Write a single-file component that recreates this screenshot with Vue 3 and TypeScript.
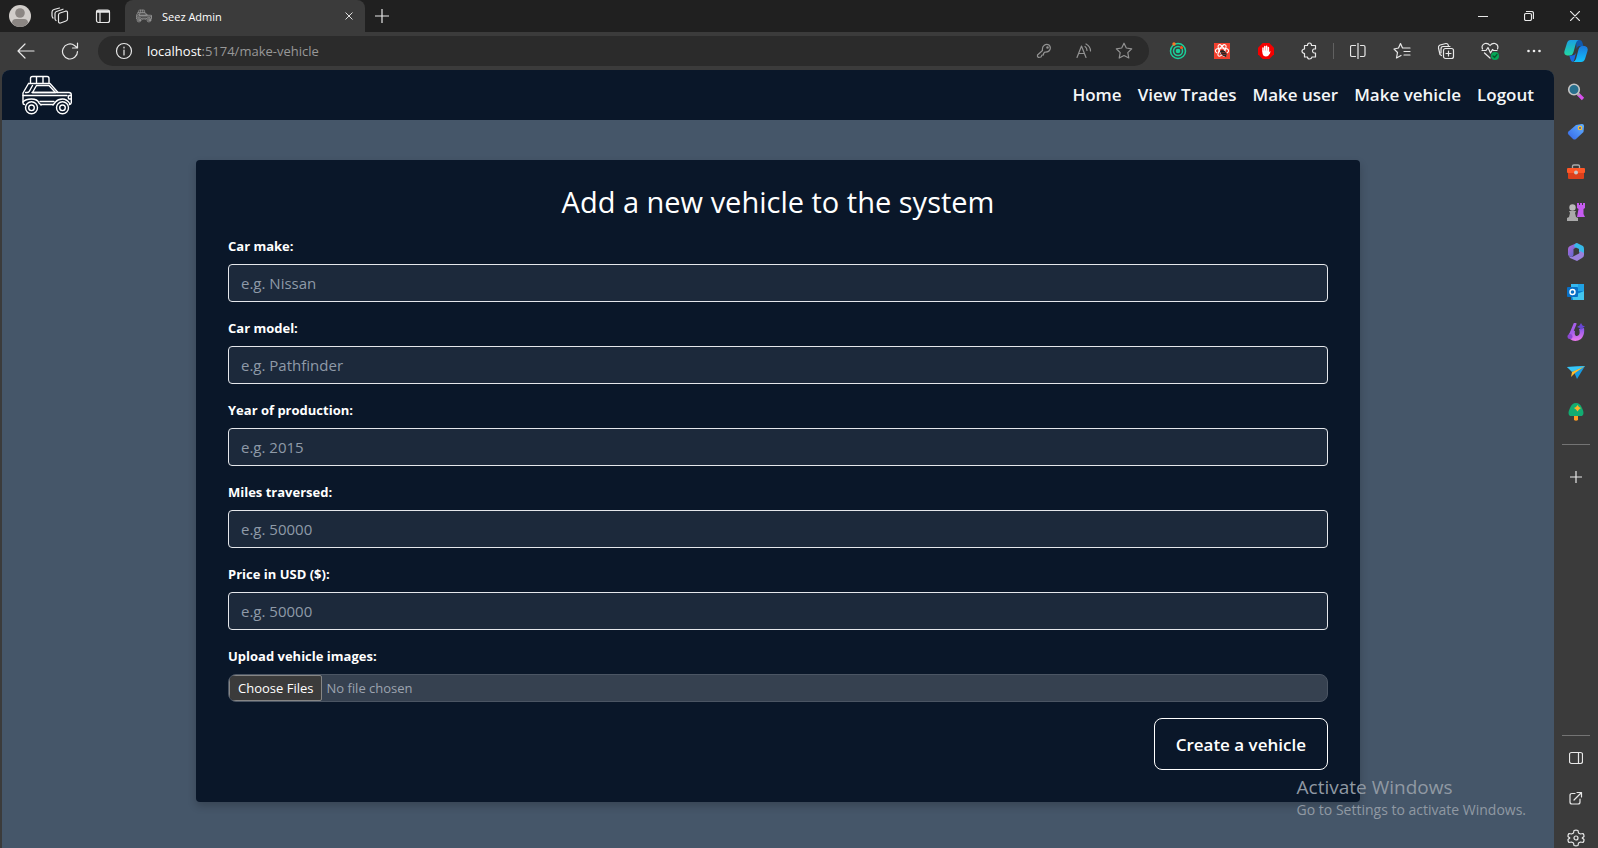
<script setup lang="ts">
import { ref } from 'vue'

interface Field {
  id: string
  label: string
  placeholder: string
}

const fields: Field[] = [
  { id: 'make', label: 'Car make:', placeholder: 'e.g. Nissan' },
  { id: 'model', label: 'Car model:', placeholder: 'e.g. Pathfinder' },
  { id: 'year', label: 'Year of production:', placeholder: 'e.g. 2015' },
  { id: 'miles', label: 'Miles traversed:', placeholder: 'e.g. 50000' },
  { id: 'price', label: 'Price in USD ($):', placeholder: 'e.g. 50000' },
]
const values = ref<Record<string, string>>({ make: '', model: '', year: '', miles: '', price: '' })
const links: string[] = ['Home', 'View Trades', 'Make user', 'Make vehicle', 'Logout']
</script>

<template>
  <div class="window">
    <svg class="defs" aria-hidden="true">
      <defs>
        <symbol id="car" viewBox="0 0 50 40">
          <g fill="none" stroke="currentColor" stroke-width="1.4" stroke-linejoin="round" stroke-linecap="round">
            <path d="M8.5 7.500V3.500Q8.500 1.500 10.500 1.500H25Q27 1.500 27 3.500V7.500M14.500 1.500V7.500M21 1.500V7.500" />
            <path d="M6.500 8.500H28L36 17.500H47Q49.300 17.500 49.300 20V27.500Q49.300 29 47.500 29.500M6.500 8.500L1 18V28Q1 29.500 2.500 29.500" />
            <path d="M14.500 10.500H27L33.500 17.500H10.500ZM10.500 10.500L7.500 16Q7 17.500 5 17.500H3.500" />
            <path d="M1 20.500H45M10 17.500H36M49 20.500H47Q45.500 22.500 47 24H49M18 26.500H32M19 29.500H31" />
            <path d="M1 27Q3.500 24 9.500 24T17 28L19 30M31 30L33.500 27Q36 24 40.500 24T48 29" />
            <circle cx="9.500" cy="32.800" r="6" /><circle cx="40.500" cy="32.800" r="6" />
            <circle cx="9.500" cy="32.800" r="2.800" /><circle cx="40.500" cy="32.800" r="2.800" />
          </g>
        </symbol>
        <linearGradient id="teal" x1="0" y1="0" x2="0" y2="1"><stop offset="0" stop-color="#1a9fe4" /><stop offset="1" stop-color="#22d8a0" /></linearGradient>
        <linearGradient id="azure" x1="0" y1="0" x2="0" y2="1"><stop offset="0" stop-color="#1b78dc" /><stop offset="1" stop-color="#12c2fb" /></linearGradient>
        <linearGradient id="tagblue" x1="1" y1="0" x2="0" y2="1"><stop offset="0" stop-color="#62b2ff" /><stop offset="1" stop-color="#3566e8" /></linearGradient>
        <linearGradient id="violet" x1="0" y1="0" x2="0" y2="1"><stop offset="0" stop-color="#8456e8" /><stop offset="1" stop-color="#ee79ee" /></linearGradient>
        <linearGradient id="office" x1="0" y1="0" x2="1" y2="1"><stop offset="0" stop-color="#be69dc" /><stop offset="1" stop-color="#4268cb" /></linearGradient>
      </defs>
    </svg>

    <header class="tabs">
      <button class="chrome avatar" aria-label="Profile">
        <svg width="24" height="24" viewBox="0 0 24 24"><circle cx="12" cy="12" r="11" fill="#d1cdca" /><circle cx="12" cy="9" r="4.800" fill="#8b8683" /><path d="M4 19Q4 15 8 15H16Q20 15 20 19Q17 23 12 23T4 19" fill="#8b8683" /></svg>
      </button>
      <button class="chrome workspaces" aria-label="Workspaces">
        <svg width="18" height="18" viewBox="0 0 18 18" class="line"><path d="M7.500 8Q7.500 6.500 9 6L14.500 4.200Q16.500 3.800 16.500 5.500V12Q16.500 13.500 15 14L9.500 16Q7.500 16.300 7.500 14.500ZM5 13.500Q4 13 4 11.500V6.500Q4 5 5.500 4.500L12 2.200M2 11Q1 10 1 8.500V5Q1 3 3 2.500L8.500 1" /></svg>
      </button>
      <button class="chrome tab-actions" aria-label="Tab actions">
        <svg width="16" height="16" viewBox="0 0 16 16" class="line"><rect x="1.500" y="2" width="13" height="12.500" rx="2" /><path d="M2.500 3.500H13.500" stroke-width="2.600" /><path d="M5 4V14" /></svg>
      </button>
      <div class="tab">
        <svg class="favicon" width="16" height="16"><use href="#car" /></svg>
        <span class="tab-title">Seez Admin</span>
        <button class="chrome close" aria-label="Close tab"><svg width="8" height="8" viewBox="0 0 10 10" class="line"><path d="M1 1L9 9M9 1L1 9" /></svg></button>
      </div>
      <button class="chrome new-tab" aria-label="New tab"><svg width="14" height="14" viewBox="0 0 14 14" class="line"><path d="M7 0V14M0 7H14" /></svg></button>
      <div class="window-buttons">
        <button class="chrome" aria-label="Minimize"><svg width="10" height="10" viewBox="0 0 10 10" class="line"><path d="M0 5.500H10" /></svg></button>
        <button class="chrome" aria-label="Restore"><svg width="10" height="10" viewBox="0 0 10 10" class="line"><rect x=".5" y="2.500" width="7" height="7" rx="1.500" /><path d="M2.500 .5H7.500Q9.500 .5 9.500 2.500V7.500" /></svg></button>
        <button class="chrome" aria-label="Close"><svg width="10" height="10" viewBox="0 0 10 10" class="line"><path d="M0 0L10 10M10 0L0 10" /></svg></button>
      </div>
    </header>

    <div class="toolbar">
      <button class="chrome back" aria-label="Back"><svg width="18" height="18" viewBox="0 0 18 18" class="line"><path d="M17 9H1.500M8 2L1 9L8 16" /></svg></button>
      <button class="chrome reload" aria-label="Refresh"><svg width="18" height="18" viewBox="0 0 18 18" class="line"><path d="M16.500 9.500A7.500 7.500 0 1 1 13.500 3.500L16 5.500M16.500 1V6H11.500" /></svg></button>
      <div class="address">
        <button class="chrome info" aria-label="Site information"><svg width="18" height="18" viewBox="0 0 18 18" class="line"><circle cx="9" cy="9" r="7.500" /><path d="M9 8V13M9 5V6" /></svg></button>
        <div class="url" role="textbox" aria-label="Address">localhost<span class="path">:5174/make-vehicle</span></div>
        <button class="chrome dim" aria-label="Passwords"><svg width="16" height="16" viewBox="0 0 16 16" class="line"><path d="M6.500 7.500Q6 4 8 2.500Q10.500 .5 13 2Q15 4 14 6.500Q13 9.300 9 9L7.500 10.500V12H6L5 14L2.500 14.500L1.500 13.500V12Z" /><circle cx="11.500" cy="4.500" r=".7" /></svg></button>
        <button class="chrome dim" aria-label="Read aloud"><svg width="16" height="16" viewBox="0 0 16 16" class="line"><path d="M1 14.500L5.500 3L10 14.500M2.700 10.500H8.500M9 3.500Q11 5 11 7.500M10 1Q14.500 3.500 14.500 8" /></svg></button>
        <button class="chrome dim" aria-label="Favorite"><svg width="18" height="18" viewBox="0 0 18 18" class="line"><path d="M9 1.200L11.300 6L16.700 6.800L12.800 10.600L13.800 16L9 13.500L4.200 16L5.200 10.600L1.300 6.800L6.700 6Z" /></svg></button>
      </div>
      <div class="extensions">
        <button class="chrome" aria-label="Network tool"><svg width="18" height="18" viewBox="0 0 18 18" fill="none" stroke="#1ad09a" stroke-width="1.500"><circle cx="9" cy="9" r="7.500" /><circle cx="9" cy="9" r="4.500" /><circle cx="9" cy="9" r="2.300" fill="#1ad09a" stroke="none" /><circle cx="5" cy="2" r="1.700" fill="#ff7724" stroke="none" /><circle cx="12.500" cy="5.500" r="1.500" fill="#ff4d16" stroke="none" /></svg></button>
        <button class="chrome" aria-label="Developer tools"><svg width="16" height="16" viewBox="0 0 16 16"><path d="M0 0H16V16H0Z" fill="#f2402e" /><g fill="none" stroke="#fff" stroke-width="1.100"><ellipse cx="8" cy="7.500" rx="6.500" ry="2.500" transform="rotate(60 8 7.500)" /><ellipse cx="8" cy="7.500" rx="6.500" ry="2.500" transform="rotate(-60 8 7.500)" /><path d="M3 10Q0 8 2.500 6Q8 4 13.500 6Q16 8 13 10" /></g><path d="M6 8L8 7L11 8L13 11L12 14L9 13L7 11Z" fill="#222" /><path d="M7 10L12 9M8 12L13 11" stroke="#f2402e" stroke-width=".5" /></svg></button>
        <button class="chrome" aria-label="Ad blocker"><svg width="16" height="16" viewBox="0 0 16 16"><path d="M4.700 0H11.300L16 4.700V11.300L11.300 16H4.700L0 11.300V4.700Z" fill="#f40000" /><path d="M5 8V5M6.800 8V3.500M8.600 8V3.300M10.400 8V4.500" stroke="#fff" stroke-width="1.500" stroke-linecap="round" /><path d="M4.300 7.500H11.100V9L12.500 8L12 10.500Q10.500 13.500 8 13.500Q5 13.500 4.400 10Z" fill="#fff" /></svg></button>
        <button class="chrome" aria-label="Extensions"><svg width="18" height="18" viewBox="0 0 18 18" class="line"><path d="M3.500 3.500H6.500Q6.500 1 8.500 1T10.500 3.500H14.500V7H12.800Q11.500 7.500 11.500 9T13 11H14.500V15H11Q10.500 17 8.500 17T6.500 15H3.500V11.500Q1 11 1 9.200T3.500 7Z" /></svg></button>
        <span class="separator"></span>
        <button class="chrome" aria-label="Split screen"><svg width="16" height="16" viewBox="0 0 16 16" class="line"><path d="M5.500 2.500H2Q.5 2.500 .5 4V12Q.5 13.500 2 13.500H5.500M10.500 2.500H13.500Q15 2.500 15 4V12Q15 13.500 13.500 13.500H10.500M8 0V16" /></svg></button>
        <button class="chrome" aria-label="Favorites"><svg width="18" height="18" viewBox="0 0 18 18" class="line"><path d="M11 6H9.500L7.500 1.500L5.500 6L1 7L4.500 10.500L3.500 16L8 13.500M11 6H17M11 9.500H17M11 13H17" /></svg></button>
        <button class="chrome" aria-label="Collections"><svg width="18" height="18" viewBox="0 0 18 18" class="line"><rect x="6.500" y="6.500" width="10" height="10" rx="2" /><path d="M11.500 9V14M9 11.500H14M4.500 13.500L3 12.500L1.500 6Q1 4 3 3L9 1.500Q11 1.300 11.500 4M4 11V7Q4 4.500 6 4.500H13" /></svg></button>
        <button class="chrome" aria-label="Browser essentials"><svg width="18" height="18" viewBox="0 0 18 18" class="line"><path d="M1.500 7Q0 3 4 1.500Q7 1 9 3.500Q11 1 14 1.500Q18 3 16.500 7M1 8.500H5L7 5.500L9.500 11L11.500 7.500L12.500 8.500H16M3.500 11L9 16" /><circle cx="14" cy="14" r="4" fill="#05a657" stroke="none" /><path d="M12 14L13.500 15.500L16 12.500" stroke="#07572f" /></svg></button>
        <button class="chrome" aria-label="More"><svg width="14" height="4" viewBox="0 0 14 4" fill="#eee"><circle cx="1.500" cy="2" r="1.300" /><circle cx="7" cy="2" r="1.300" /><circle cx="12.500" cy="2" r="1.300" /></svg></button>
      </div>
      <button class="chrome copilot" aria-label="Copilot"><svg width="24" height="24" viewBox="0 0 24 24"><path d="M12 1H15.500Q17.500 1 18.200 3L19.500 7H16Q13.500 7 12.500 10Z" fill="#1159ad" /><path d="M6.500 1H14.500Q12.800 1.500 12 4L9.500 13Q8.500 16.500 5.500 16.500H3Q-.5 16 .5 12L3 4Q4 1 6.500 1Z" fill="url(#teal)" /><path d="M12 14L10.500 20Q9.800 23 8.500 23Q7 22.500 6.300 20L5.300 16.500H8Q10.500 16.500 12 14Z" fill="#1769e2" /><path d="M18 7H21Q24.500 8 23.500 12L21 20Q20 23 17 23H9Q11 22.500 12 20L14.500 10.500Q15.500 7 18 7Z" fill="url(#azure)" /></svg></button>
    </div>

    <div class="workspace">
      <div class="page">
        <nav class="nav" aria-label="Main">
          <a href="#" class="brand" aria-label="Seez Admin"><svg width="50" height="40"><use href="#car" /></svg></a>
          <div class="links"><a v-for="link in links" :key="link" href="#">{{ link }}</a></div>
        </nav>
        <main class="content">
          <form class="card" @submit.prevent>
            <h1>Add a new vehicle to the system</h1>
            <div v-for="field in fields" :key="field.id" class="field">
              <label :for="field.id">{{ field.label }}</label>
              <input :id="field.id" v-model="values[field.id]" class="text-input" type="text" :placeholder="field.placeholder">
            </div>
            <div class="field">
              <label for="images">Upload vehicle images:</label>
              <input id="images" class="file-input" type="file" multiple>
            </div>
            <button class="submit" type="submit">Create a vehicle</button>
          </form>
        </main>
      </div>

      <aside class="sidebar" aria-label="Browser sidebar">
        <button class="chrome app" aria-label="Search"><svg width="18" height="18" viewBox="0 0 18 18"><path d="M11 11L16 16" stroke="#d850ee" stroke-width="3.200" /><path d="M10 10L12.500 12.500" stroke="#aaa" stroke-width="2" /><circle cx="7" cy="6.500" r="5.300" fill="#286f8d" stroke="#c4c4c4" stroke-width="1.600" /></svg></button>
        <button class="chrome app" aria-label="Shopping"><svg width="18" height="18" viewBox="0 0 18 18"><path d="M9 2L15 1Q17 1 17 3L16.500 9L9 16Q7.500 17 6 16L1.500 11.500Q0 10 1.500 8.500Z" fill="url(#tagblue)" /><circle cx="13" cy="5" r="1.700" fill="#355cc5" stroke="#ffc12c" stroke-width="1.200" /></svg></button>
        <button class="chrome app" aria-label="Tools"><svg width="18" height="18" viewBox="0 0 18 18"><path d="M5.500 5V3Q5.500 2 7 2H11Q12.500 2 12.500 3V5" fill="none" stroke="#aaa" stroke-width="1.300" /><rect y="5" width="18" height="5" rx="1" fill="#ff5727" /><path d="M1 10H17V15Q17 16 16 16H2Q1 16 1 15Z" fill="#dc401b" /><circle cx="9" cy="9.500" r="2" fill="#c9c9c9" /></svg></button>
        <button class="chrome app" aria-label="Games"><svg width="18" height="18" viewBox="0 0 18 18"><path d="M10 0H12V2H13V0H15V2H16V0H18V5L16.500 6V11L18 14H10L11.500 6L10 5Z" fill="#c65cf0" /><circle cx="5.500" cy="4.500" r="3.200" fill="#b9b9b9" /><path d="M2 8H9L8 10L9 14L11 15V18H0V15L2 14L3 10Z" fill="#a9a9a9" /></svg></button>
        <button class="chrome app" aria-label="Microsoft 365"><svg width="18" height="18" viewBox="0 0 18 18"><path d="M10 0L3 3Q1 4 1 6V12L4 14Q6.500 14 6.500 11V6L11 3.500Z" fill="url(#office)" /><path d="M10 0L16 3Q17 4 17 6V12L12 9V6L7 3.500Q7 1 10 0Z" fill="#37b9e8" /><path d="M17 10V12Q17 14 15 15L10 18L3 15L1 12Q3 14.500 5 14L12 10.500L13 8Z" fill="#9a82dc" /></svg></button>
        <button class="chrome app" aria-label="Outlook"><svg width="18" height="18" viewBox="0 0 18 18"><path d="M4 1H17V17H4Z" fill="#087cce" /><path d="M4 1H11V7H4Z" fill="#35b9f1" /><path d="M11 1H17V8H11Z" fill="#20a2e5" /><path d="M5 13L17 8V17H6Z" fill="#43c5ee" /><rect y="4" width="11" height="10" rx="1" fill="#0870c6" /><circle cx="5.500" cy="9" r="2.500" fill="none" stroke="#fff" stroke-width="1.400" /></svg></button>
        <button class="chrome app" aria-label="Designer"><svg width="18" height="18" viewBox="0 0 18 18"><path d="M5 7Q0 12 3 16Q8 20 14 16Q18 12 17 5L12 6Q14 12 10 13Q7 13 8 8Z" fill="url(#violet)" /><path d="M3 13L8 1" stroke="#a65ee9" stroke-width="3" stroke-linecap="round" /><path d="M14 0L15.500 2.500L18 3.500L15.500 5L14 7L12.500 5L10 4L12.500 2.500Z" fill="#6847d3" /><circle cx="3" cy="13.500" r="2.500" fill="#8c48d3" /></svg></button>
        <button class="chrome app" aria-label="Drop"><svg width="18" height="18" viewBox="0 0 18 18"><path d="M0 4L18 3L10 16L7 9Z" fill="#169ae1" /><path d="M0 4L18 3L5 9Z" fill="#38c6f6" /><path d="M18 3L5 9L4 14L8 10Z" fill="#ffbb2e" /></svg></button>
        <button class="chrome app" aria-label="E-tree"><svg width="18" height="18" viewBox="0 0 18 18"><path d="M7 12H11V17Q9 18.500 7 17Z" fill="#ff9b20" /><path d="M9 0Q13 0 15 5Q18 11 15 13H3Q0 11 3 5Q5 0 9 0Z" fill="#12ac72" /><path d="M10.500 2L12 4L14 5L12 6.500L10.500 8.500L9 6.500L7 5L9 4Z" fill="#ffb128" /></svg></button>
        <span class="rule apps-end"></span>
        <button class="chrome customize" aria-label="Customize"><svg width="12" height="12" viewBox="0 0 12 12" class="line"><path d="M6 0V12M0 6H12" /></svg></button>
        <div class="sidebar-end">
          <span class="rule"></span>
          <button class="chrome utility first" aria-label="Toggle sidebar"><svg width="14" height="14" viewBox="0 0 14 14" class="line"><rect x=".5" y="1.500" width="13" height="11" rx="2" /><path d="M9.500 1.500V12.500" /></svg></button>
          <button class="chrome utility" aria-label="Open externally"><svg width="14" height="14" viewBox="0 0 14 14" class="line"><path d="M6 2.500H3Q1 2.500 1 4.500V11Q1 13 3 13H9Q11 13 11 11V8M5 9L12 2M8 1.500H12.500V6" /></svg></button>
          <button class="chrome utility" aria-label="Settings"><svg width="18" height="18" viewBox="0 0 18 18" class="line"><path d="M7 1.500Q9 .8 11 1.500L11.500 4L13.500 5L16 4.500Q17.300 6 17 7.500L15.200 9L17 10.500Q17.300 12 16 13.500L13.500 13L11.500 14L11 16.500Q9 17.200 7 16.500L6.500 14L4.500 13L2 13.500Q.7 12 1 10.500L2.800 9L1 7.500Q.7 6 2 4.500L4.500 5L6.500 4Z" /><circle cx="9" cy="9" r="2" /></svg></button>
        </div>
      </aside>
    </div>

    <div class="watermark">
      <div class="watermark-title">Activate Windows</div>
      <div class="watermark-text">Go to Settings to activate Windows.</div>
    </div>
  </div>
</template>

<style>
body { margin: 0; background: #3b3b3b; }
</style>

<style scoped>
* { box-sizing: border-box; }
.window { position: relative; display: flex; flex-direction: column; min-height: 100vh; overflow: hidden; background: #3b3b3b; color: #fff; font-family: "Open Sans", "Noto Sans", sans-serif; }
.defs { position: absolute; width: 0; height: 0; }
.line { fill: none; stroke: currentColor; stroke-width: 1.2; stroke-linecap: round; stroke-linejoin: round; }
.chrome { display: flex; flex: none; align-items: center; justify-content: center; padding: 0; border: 0; background: transparent; color: #e8e8e8; }

.tabs { display: flex; height: 32px; background: #202020; }
.avatar { width: 40px; }
.workspaces { width: 40px; }
.tab-actions { width: 45px; }
.tab { display: flex; align-items: center; width: 240px; padding: 0 8px 0 11px; border-radius: 8px 8px 0 0; background: #3b3b3b; }
.favicon { color: #c9c9c9; }
.tab-title { flex: 1; padding-left: 10px; font-size: 11px; }
.close { width: 16px; height: 16px; }
.new-tab { width: 34px; }
.window-buttons { display: flex; margin-left: auto; }
.window-buttons .chrome { width: 46px; }

.toolbar { display: flex; align-items: center; height: 38px; }
.back { width: 52px; }
.reload { width: 36px; }
.address { display: flex; flex: 1; align-items: center; height: 30px; margin: 0 7px 0 10px; padding: 0 5px 0 16px; border-radius: 15px; background: #2b2b2b; }
.info { width: 20px; }
.url { flex: 1; padding-left: 13px; font-size: 13px; }
.path { color: #989898; }
.dim { width: 40px; color: #929292; }
.extensions { display: flex; align-items: center; }
.extensions .chrome { width: 44px; }
.separator { width: 1px; height: 16px; margin: 0 2px 0 1px; background: #616161; }
.copilot { width: 42px; padding-right: 2px; }

.workspace { display: flex; flex: 1; }
.page { flex: 1; margin-left: 2px; overflow: hidden; border-radius: 8px 8px 0 0; background: #455669; }
.nav { display: flex; align-items: center; justify-content: space-between; height: 50px; padding: 0 20px; background: #0a1729; }
.brand { display: flex; color: #fff; }
.links { display: flex; gap: 16px; }
.links a { color: #f4f6f8; font-size: 17px; font-weight: 600; line-height: 28px; text-decoration: none; }
.content { padding: 40px 0; }
.card { display: flex; flex-direction: column; width: 75%; margin: 0 auto; padding: 24px 32px 32px; border-radius: 4px; background: #0a1729; box-shadow: 0 4px 8px #0003; }
h1 { margin: 0 0 16px; font-size: 29px; font-weight: 400; line-height: 36px; text-align: center; }
.field { display: flex; flex-direction: column; margin-bottom: 16px; }
label { margin-bottom: 8px; font-size: 13px; font-weight: 700; line-height: 20px; }
.text-input { width: 100%; height: 38px; padding: 0 12px; border: 1px solid #e5e7eb; border-radius: 4px; background: #1c293b; color: #fff; font: 400 15px "Open Sans", "Noto Sans", sans-serif; }
.text-input::placeholder { color: #8f9aa8; opacity: 1; }
.file-input { width: 100%; height: 28px; padding: 0; border: 1px solid #4b5563; border-radius: 8px; background: #364150; color: #9ca3af; font: 400 13px/20px "Open Sans", "Noto Sans", sans-serif; }
.file-input::file-selector-button { height: 26px; margin: 0 4px 0 0; padding: 0 8px; border: 1px solid #858585; border-radius: 2px; background: #3b3b3b; color: #fff; font: inherit; }
.submit { align-self: flex-end; height: 52px; padding: 0 21px; border: 1px solid #fff; border-radius: 8px; background: transparent; color: #fff; font: 600 17px "Open Sans", "Noto Sans", sans-serif; }

.sidebar { display: flex; flex-direction: column; align-items: center; width: 44px; padding-top: 2px; }
.app { width: 44px; height: 40px; }
.rule { display: block; width: 28px; height: 1px; background: #747474; }
.apps-end { margin-top: 12px; }
.customize { width: 44px; height: 20px; margin-top: 22px; }
.sidebar-end { display: flex; flex-direction: column; align-items: center; gap: 20px; margin-top: auto; }
.utility { width: 44px; height: 20px; }
.utility.first { margin-top: -8px; }

.watermark { position: absolute; right: 72px; bottom: 28px; color: #9099a3; pointer-events: none; }
.watermark-title { font-size: 19px; line-height: 26px; }
.watermark-text { font-size: 14px; line-height: 20px; }
</style>
